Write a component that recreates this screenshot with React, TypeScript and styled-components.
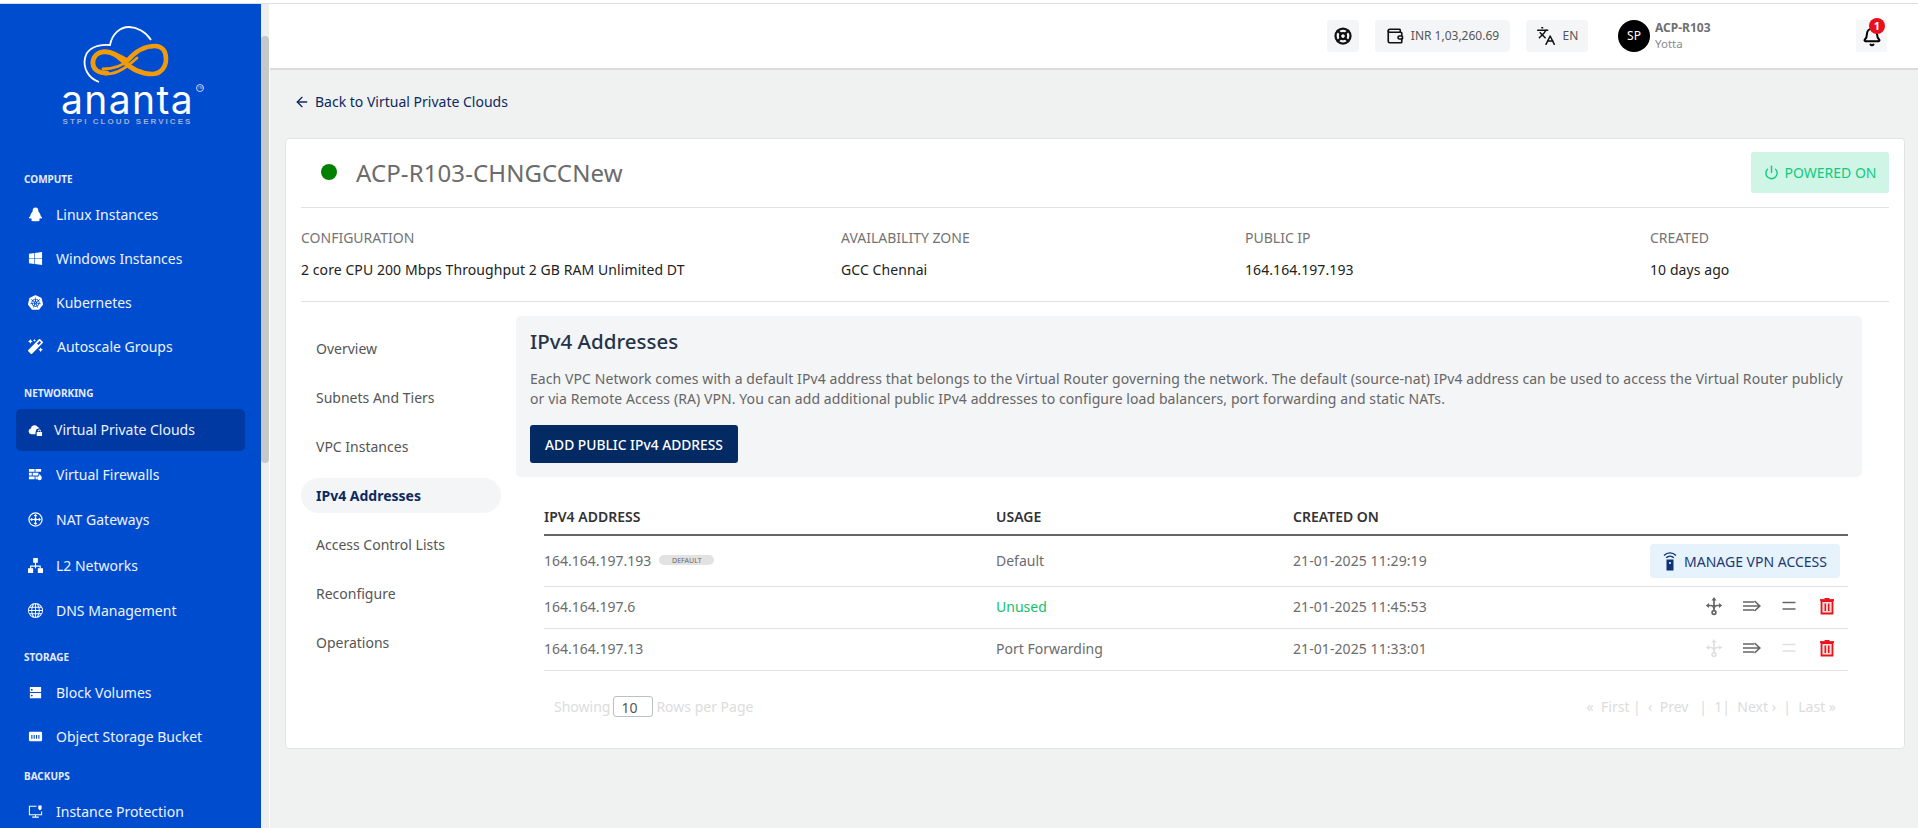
import React from "react";
import styled, { createGlobalStyle } from "styled-components";
import { ArrowLeft, Bell, Languages, LifeBuoy, Power, Wallet } from "lucide-react";
import { FaWindows, FaMagic } from "react-icons/fa";
import { SiKubernetes } from "react-icons/si";
import { BsGlobe } from "react-icons/bs";

const Global = createGlobalStyle`
  html, body { margin: 0; padding: 0; height: 100%; overflow: hidden; background: #fff; }
  * { box-sizing: border-box; }
  body { font-family: "Noto Sans", "Open Sans", sans-serif; color: #6c6c6c; }
`;

const Page = styled.div`
  width: 1918px; height: 828px; overflow: hidden; display: flex; flex-direction: column;
`;
const TopStrip = styled.div`
  height: 4px; flex: none; background: #fff; border-top: 2px solid #fff; border-bottom: 1px solid #dedede;
`;
const Shell = styled.div`
  display: flex; flex: 1; min-height: 0;
`;
const Sidebar = styled.aside`
  width: 261px; flex: none; background: #004ccf; color: #fff; overflow: hidden; display: flex; flex-direction: column; padding-top: 20px;
`;
const LogoWrap = styled.div`
  height: 142px; flex: none; display: flex; flex-direction: column; align-items: center; padding-right: 6px;
`;
const LogoMark = styled.svg`
  width: 95px; height: 60px; flex: none;
`;
const LogoWord = styled.div`
  font-family: "Inter", sans-serif; font-size: 39px; font-weight: 400; line-height: 30px; margin-top: 1px; letter-spacing: 1.4px; position: relative;
`;
const Tm = styled.span`
  position: absolute; right: -10px; top: -1px; width: 8px; height: 8px; border: 1px solid #c7d6f3; border-radius: 50%;
  font-size: 3px; line-height: 6px; text-align: center; letter-spacing: 0; color: #dde;
`;
const LogoSub = styled.div`
  font-family: "Liberation Sans", sans-serif; font-size: 8px; font-weight: 700; letter-spacing: 2.05px; color: #9db0d6; line-height: 10px; margin-top: 2px;
`;
const SectionLabel = styled.div<{ $h: number; $pb: number }>`
  height: ${p => p.$h}px; flex: none; padding: 0 0 ${p => p.$pb}px 24px; font-size: 10px; line-height: 14px; font-weight: 700; color: #e4ebfa; display: flex; align-items: flex-end;
`;
const NavItem = styled.div<{ $active?: boolean; $gap?: number; $h?: number }>`
  height: ${p => p.$h ?? 44}px; flex: none; margin: 0 16px; padding: 0 0 2px 12px; display: flex; align-items: center; gap: ${p => p.$gap ?? 13}px;
  font-size: 14px; color: #eef3ff; border-radius: 5px; background: ${p => (p.$active ? "#0039a1" : "transparent")};
  svg { width: 15px; height: 15px; flex: none; color: #fff; }
`;
const ScrollTrack = styled.div`
  width: 8px; flex: none; background: #eeeeee; padding-top: 32px; margin-right: 1px;
`;
const ScrollThumb = styled.div`
  height: 427px; width: 8px; border-radius: 4px; background: #c8c8c8;
`;
const Main = styled.main`
  flex: 1; min-width: 0; display: flex; flex-direction: column; background: #f0f2f1;
`;
const Header = styled.header`
  height: 66px; flex: none; background: #fff; border-bottom: 2px solid #dcdcdc; display: flex; align-items: center; justify-content: flex-end; padding-right: 31px; padding-bottom: 1px;
`;
const HeaderChip = styled.div<{ $w: number; $mr: number }>`
  width: ${p => p.$w}px; height: 32px; margin-right: ${p => p.$mr}px; border-radius: 4px; background: #f4f5f7; display: flex; align-items: center; justify-content: center; gap: 7px;
  font-size: 12px; color: #555;
  svg { color: #111; flex: none; }
`;
const Avatar = styled.div`
  width: 32px; height: 32px; border-radius: 50%; background: #000; color: #fff; font-size: 12px; display: flex; align-items: center; justify-content: center; margin-right: 5px; flex: none;
`;
const UserBlock = styled.div`
  width: 201px; display: flex; flex-direction: column; line-height: 16px;
`;
const UserName = styled.div`
  font-size: 12px; font-weight: 700; color: #707070;
`;
const UserOrg = styled.div`
  font-size: 11.5px; color: #8a8a8a;
`;
const BellBox = styled.div`
  width: 31px; height: 32px; background: #f6f7f8; position: relative; display: flex; align-items: center; justify-content: center;
  svg { color: #000; margin-top: 3px; }
`;
const BellBadge = styled.span`
  position: absolute; top: -2px; right: 2px; width: 16px; height: 16px; border-radius: 50%; background: #e9101d; color: #fff; font-size: 11px; font-weight: 700; display: flex; align-items: center; justify-content: center;
`;
const Content = styled.div`
  padding: 0 13px 0 15px; flex: 1; min-height: 0;
`;
const BackLink = styled.div`
  height: 68px; display: flex; align-items: center; gap: 5px; padding: 0 0 5px 9px; color: #0d2a5e; font-size: 14px;
  svg { color: #0d2a5e; }
`;
const Card = styled.section`
  height: 611px; background: #fff; border: 1px solid #e2e4e4; border-radius: 4px; padding: 0 15px;
`;
const TitleRow = styled.div`
  height: 69px; display: flex; align-items: center; justify-content: space-between; border-bottom: 1px solid #e2e2e2; padding: 0 0 0 20px;
`;
const TitleLeft = styled.div`
  display: flex; align-items: center; gap: 19px; padding-bottom: 2px;
`;
const StatusDot = styled.span`
  width: 16px; height: 16px; border-radius: 50%; background: #008000; flex: none;
`;
const Title = styled.h1`
  margin: 0; font-size: 24px; font-weight: 400; letter-spacing: 0.1px; color: #6b6b6b;
`;
const PowerBadge = styled.div`
  width: 138px; height: 41px; background: #cff5e6; color: #13c981; border-radius: 3px; display: flex; align-items: center; justify-content: center; gap: 6px; font-size: 14px; margin-top: -1px; white-space: nowrap;
`;
const InfoRow = styled.div`
  height: 94px; display: grid; grid-template-columns: 540px 404px 405px 1fr; border-bottom: 1px solid #e2e2e2; padding-top: 20px;
`;
const InfoLabel = styled.div`
  font-size: 14px; line-height: 20px; color: #747474;
`;
const InfoValue = styled.div`
  font-size: 14px; line-height: 20px; margin-top: 12px; color: #222; letter-spacing: 0.08px;
`;
const Body = styled.div`
  display: flex; padding-top: 14px; gap: 15px;
`;
const Tabs = styled.nav`
  width: 200px; flex: none; display: flex; flex-direction: column; padding-top: 15px;
`;
const Tab = styled.div<{ $active?: boolean }>`
  height: 35px; margin-bottom: 14px; border-radius: 18px; padding-left: 15px; display: flex; align-items: center; font-size: 14px;
  color: ${p => (p.$active ? "#0d2a5e" : "#555")}; font-weight: ${p => (p.$active ? 700 : 400)}; background: ${p => (p.$active ? "#f4f5f7" : "transparent")};
`;
const Pane = styled.div`
  width: 1346px; flex: none;
`;
const Intro = styled.div`
  height: 161px; border-radius: 5px; background: #f4f5f7; padding: 11px 14px;
`;
const IntroTitle = styled.h2`
  margin: 0; font-size: 20.5px; line-height: 28px; font-weight: 500; color: #243349;
`;
const IntroText = styled.p`
  margin: 14px 0 0; font-size: 14px; line-height: 20px; color: #666; letter-spacing: 0.08px;
`;
const PrimaryButton = styled.button`
  display: block; margin-top: 16px; width: 208px; height: 38px; border: 0; border-radius: 3px; background: #032a63; color: #fff; font: 500 13.8px "Noto Sans", sans-serif; padding: 0;
`;
const TableWrap = styled.div`
  padding: 24px 14px 0 28px;
`;
const cols = "452px 297px 1fr";
const HeadRow = styled.div`
  display: grid; grid-template-columns: ${cols}; height: 35px; align-items: center; border-bottom: 2px solid #666; font-size: 14px; font-weight: 600; color: #333; padding-bottom: 3px;
`;
const Row = styled.div<{ $h: number }>`
  display: grid; grid-template-columns: ${cols} 220px; height: ${p => p.$h}px; align-items: center; border-bottom: 1px solid #e2e2e2; font-size: 14px; color: #6c6c6c; padding-bottom: 2px;
`;
const AddressCell = styled.div`
  display: flex; align-items: center; gap: 8px;
`;
const DefaultTag = styled.span`
  width: 55px; height: 10px; border-radius: 6px; background: #e2e2e2; color: #666; font-size: 7px; display: flex; align-items: center; justify-content: center;
`;
const UsageCell = styled.div<{ $ok?: boolean }>`
  color: ${p => (p.$ok ? "#13c06f" : "#6c6c6c")};
`;
const DateCell = styled.div`
  letter-spacing: 0.08px;
`;
const Actions = styled.div<{ $lift?: boolean }>`
  display: flex; align-items: center; justify-content: flex-end; padding: 0 11px ${p => (p.$lift ? 2 : 0)}px 0;
`;
const VpnButton = styled.div`
  width: 190px; height: 34px; margin: 2px -3px 0 0; border-radius: 4px; background: #e6f2fc; color: #1c3a72; display: flex; align-items: center; justify-content: center; gap: 7px; font-size: 14px; white-space: nowrap;
`;
const ActionIcon = styled.svg<{ $off?: boolean; $w?: number }>`
  width: 20px; height: 20px; margin-left: ${p => p.$w ?? 18}px; color: ${p => (p.$off ? "#dfe1e1" : "#666")}; flex: none;
`;
const Pager = styled.div`
  display: flex; justify-content: space-between; align-items: center; height: 70px; padding: 0 12px 0 10px; color: #dcdcdc; font-size: 14px;
`;
const PagerLeft = styled.div`
  display: flex; align-items: center; gap: 3px;
`;
const RowsBox = styled.span`
  width: 40px; height: 21px; border: 1px solid #b9c0c8; border-radius: 3px; color: #555; padding-left: 7px; font-size: 14px; line-height: 21px;
`;
const PagerRight = styled.div`
  white-space: pre;
`;

const TuxIcon = () => (
  <svg viewBox="0 0 16 16" fill="currentColor"><path d="M8 .5c1.900 0 3 1.400 3 3.100 0 1 .3 1.500.9 2.300.9 1.100 1.600 2.600 1.700 4 .9.500 1.500 1.300 1.400 1.900-.2.600-1.400.6-2.300.3-.2.400-.4.800-.7 1.100.4.500.6 1 .3 1.400-.4.500-2.500.500-4.300.500s-3.900 0-4.300-.5c-.3-.4-.1-.9.300-1.400-.3-.3-.5-.7-.7-1.100-.9.300-2.100.3-2.300-.3-.1-.6.500-1.400 1.400-1.900.1-1.400.8-2.900 1.700-4 .6-.8.900-1.300.9-2.300C5 1.900 6.100.5 8 .5z"/></svg>
);
const VpcIcon = () => (
  <svg viewBox="0 0 16 16" fill="currentColor"><path d="M3.600 13A3.100 3.100 0 0 1 3 6.900 4 4 0 0 1 10.600 5.700a3 3 0 0 1 1.800 1.100H11a2.600 2.600 0 0 0-2.500 2.600v.7H8V13z"/><path d="M9.300 10.600h5.700V15H9.300zM10.500 10.200V9.400a1.700 1.700 0 0 1 3.300 0v.8h-1v-.8a.7.700 0 0 0-1.300 0v.8z"/></svg>
);
const FirewallIcon = () => (
  <svg viewBox="0 0 16 16" fill="currentColor"><path d="M1 2h6v3H1zM8 2h6v3H8zM1 6h3v3H1zM5 6h6v3H5zM1 10h6v3H1zM8 10h1.500v3H8z"/><path d="M12.300 7.500c.6 1.300 2.400 2 2.400 4.200a2.500 2.500 0 0 1-5 0c0-1.300.8-1.900 1.300-2.500.1.600.3.900.7 1 .3-.9.100-1.800.6-2.700z"/></svg>
);
const NatIcon = () => (
  <svg viewBox="0 0 16 16" fill="none" stroke="currentColor" strokeWidth="1.300"><circle cx="8" cy="8" r="7"/><path d="M8 3v10M3 8h10" strokeWidth="1"/><path d="M6.500 4.500 8 3l1.500 1.500M6.500 11.500 8 13l1.500-1.500M4.500 6.500 3 8l1.500 1.500M11.500 6.500 13 8l-1.500 1.500" strokeWidth="1.100"/><circle cx="8" cy="8" r="1.500" fill="currentColor" stroke="none"/></svg>
);
const L2Icon = () => (
  <svg viewBox="0 0 16 16" fill="currentColor"><path d="M5.500 0h5v5h-5zM7.400 5h1.200v3h5v3h-1.200V9.200H8.600V11H7.400V9.200H3.400V11H2.200V8h5.200zM0 11h5.500v5H0zM10.500 11H16v5h-5.500z"/></svg>
);
const BlockIcon = () => (
  <svg viewBox="0 0 16 16" fill="currentColor"><path fillRule="evenodd" d="M2 2h12v5.500H2zM2 8.500h12V14H2zM4 4a1 1 0 1 0 0 2 1 1 0 0 0 0-2zM4 10.300a1 1 0 1 0 0 2 1 1 0 0 0 0-2z"/></svg>
);
const BucketIcon = () => (
  <svg viewBox="0 0 16 16" fill="currentColor"><path fillRule="evenodd" d="M2 3h12a1.500 1.500 0 0 1 1 1v8a1.500 1.500 0 0 1-1 1H2a1.500 1.500 0 0 1-1-1V4a1.500 1.500 0 0 1 1-1zM3.500 6.500v4h1.200v-4zM6 6.500v4h1.200v-4zM8.500 6.500v4h1.200v-4zM11 6.500v4h1.200v-4z"/></svg>
);
const ProtectIcon = () => (
  <svg viewBox="0 0 16 16" fill="none" stroke="currentColor" strokeWidth="1.100"><path d="M9 2.500H1.500v9h13V8M8 11.500v2.500M4.500 14h7"/><path d="M11 1.500h3.500v3c0 1-1 1.800-1.750 2.200-.75-.4-1.750-1.200-1.750-2.200z" fill="currentColor" stroke="none"/></svg>
);
const MoveIcon = (p: { off?: boolean }) => (
  <ActionIcon $off={p.off} $w={0} viewBox="0 0 20 20" fill="none" stroke="currentColor" strokeWidth="1.700">
    <path d="M10 3v11M4 9.500h2.500c2 0 3.500 1.500 3.500 4M16 9.500h-2.500c-2 0-3.500 1.500-3.500 4" />
    <path d="M10 1 7.500 4.500h5zM1.800 9.500 5 12V7zM18.200 9.500 15 12V7z" fill="currentColor" stroke="none" />
    <circle cx="10" cy="16.500" r="1.900" fill="#fff" />
  </ActionIcon>
);
const ForwardIcon = () => (
  <ActionIcon $w={17} viewBox="0 0 20 20" fill="none" stroke="currentColor" strokeWidth="1.700">
    <path d="M2 6h11M2 10h16M2 14h11M13.500 5 18.800 10l-5.300 5" />
  </ActionIcon>
);
const EqualIcon = (p: { off?: boolean }) => (
  <ActionIcon $off={p.off} $w={18} viewBox="0 0 20 20" fill="none" stroke="currentColor" strokeWidth="1.700">
    <path d="M3.500 6.500h13M3.500 13h13" />
  </ActionIcon>
);
const TrashIcon = () => (
  <ActionIcon $w={18} viewBox="0 0 20 20" style={{ color: "#e8141c" }} fill="none" stroke="currentColor">
    <path d="M4.500 5h11v12.500h-11z" fill="#fbdcdc" strokeWidth="1.800" />
    <path d="M3 4h14" strokeWidth="1.800" />
    <path d="M7.500 2h5v1.500h-5z" fill="currentColor" stroke="none" />
    <path d="M8.300 7.500v7.500M11.700 7.500v7.500" strokeWidth="1.600" />
  </ActionIcon>
);
const VpnIcon = () => (
  <svg width="14" height="20" viewBox="0 0 14 20" fill="none" stroke="#0f3272" strokeWidth="1.400" style={{ flex: "none" }}>
    <path d="M1 4.500C4.500 1 9.500 1 13 4.500M3.200 6.800C5.400 4.800 8.600 4.800 10.800 6.800" />
    <path d="M3.500 8.500h7V19.500h-7z" fill="#0f3272" stroke="none" />
    <circle cx="7" cy="12" r="1" fill="#fff" stroke="none" />
  </svg>
);

const nav = (icon: React.ReactNode, text: string, extra: { active?: boolean; gap?: number; h?: number } = {}) => (
  <NavItem $active={extra.active} $gap={extra.gap} $h={extra.h} key={text}>{icon}{text}</NavItem>
);

export default function App() {
  return (
    <Page>
      <Global />
      <TopStrip />
      <Shell>
        <Sidebar>
          <LogoWrap>
            <LogoMark viewBox="80 24 95 60" fill="none">
              <path d="M99 82C88 78 83 68 85 58 87 49 96 44 110 45 112 34 120 27 129 27 137 27 146 32 151 40" stroke="#fff" strokeWidth="1.800" />
              <path d="M103 69C115 69 122 66 128 60 117 54 110 50 103 51 96 52 92 57 92 63 92 70 99 74 107 74 118 74 128 66 137 58" stroke="#f39a0b" strokeWidth="2.800" strokeLinecap="round" />
              <path d="M128 60C135 52 145 46 155 46 163 46 166 52 166 59 166 68 160 74 152 74 140 74 130 68 122 60 117 55 110 51 103 52 97 53 93 57 93 63 93 70 99 73 107 73" stroke="#f39a0b" strokeWidth="4.600" strokeLinecap="round" />
            </LogoMark>
            <LogoWord>ananta<Tm>TM</Tm></LogoWord>
            <LogoSub>STPI CLOUD SERVICES</LogoSub>
          </LogoWrap>
          <SectionLabel $h={26} $pb={6}>COMPUTE</SectionLabel>
          {nav(<TuxIcon />, "Linux Instances", { h: 46 })}
          {nav(<FaWindows />, "Windows Instances", { h: 43 })}
          {nav(<SiKubernetes />, "Kubernetes")}
          {nav(<FaMagic />, "Autoscale Groups", { gap: 14 })}
          <SectionLabel $h={40} $pb={9}>NETWORKING</SectionLabel>
          {nav(<VpcIcon />, "Virtual Private Clouds", { active: true, gap: 11, h: 42 })}
          {nav(<FirewallIcon />, "Virtual Firewalls", { h: 48 })}
          {nav(<NatIcon />, "NAT Gateways", { h: 42 })}
          {nav(<L2Icon />, "L2 Networks", { h: 50 })}
          {nav(<BsGlobe />, "DNS Management", { h: 40 })}
          <SectionLabel $h={39} $pb={6}>STORAGE</SectionLabel>
          {nav(<BlockIcon />, "Block Volumes", { h: 46 })}
          {nav(<BucketIcon />, "Object Storage Bucket", { h: 42 })}
          <SectionLabel $h={32} $pb={7}>BACKUPS</SectionLabel>
          {nav(<ProtectIcon />, "Instance Protection")}
        </Sidebar>
        <ScrollTrack><ScrollThumb /></ScrollTrack>
        <Main>
          <Header>
            <HeaderChip $w={32} $mr={16}><LifeBuoy size={18} strokeWidth={3} /></HeaderChip>
            <HeaderChip $w={135} $mr={16}><Wallet size={18} strokeWidth={2.2} />INR 1,03,260.69</HeaderChip>
            <HeaderChip $w={62} $mr={30}><Languages size={20} strokeWidth={1.8} />EN</HeaderChip>
            <Avatar>SP</Avatar>
            <UserBlock>
              <UserName>ACP-R103</UserName>
              <UserOrg>Yotta</UserOrg>
            </UserBlock>
            <BellBox><Bell size={20} strokeWidth={2.4} /><BellBadge>1</BellBadge></BellBox>
          </Header>
          <Content>
            <BackLink><ArrowLeft size={16} />Back to Virtual Private Clouds</BackLink>
            <Card>
              <TitleRow>
                <TitleLeft><StatusDot /><Title>ACP-R103-CHNGCCNew</Title></TitleLeft>
                <PowerBadge><Power size={15} strokeWidth={2.2} />POWERED ON</PowerBadge>
              </TitleRow>
              <InfoRow>
                <div><InfoLabel>CONFIGURATION</InfoLabel><InfoValue>2 core CPU 200 Mbps Throughput 2 GB RAM Unlimited DT</InfoValue></div>
                <div><InfoLabel>AVAILABILITY ZONE</InfoLabel><InfoValue>GCC Chennai</InfoValue></div>
                <div><InfoLabel>PUBLIC IP</InfoLabel><InfoValue>164.164.197.193</InfoValue></div>
                <div><InfoLabel>CREATED</InfoLabel><InfoValue>10 days ago</InfoValue></div>
              </InfoRow>
              <Body>
                <Tabs>
                  <Tab>Overview</Tab>
                  <Tab>Subnets And Tiers</Tab>
                  <Tab>VPC Instances</Tab>
                  <Tab $active>IPv4 Addresses</Tab>
                  <Tab>Access Control Lists</Tab>
                  <Tab>Reconfigure</Tab>
                  <Tab>Operations</Tab>
                </Tabs>
                <Pane>
                  <Intro>
                    <IntroTitle>IPv4 Addresses</IntroTitle>
                    <IntroText>Each VPC Network comes with a default IPv4 address that belongs to the Virtual Router governing the network. The default (source-nat) IPv4 address can be used to access the Virtual Router publicly or via Remote Access (RA) VPN. You can add additional public IPv4 addresses to configure load balancers, port forwarding and static NATs.</IntroText>
                    <PrimaryButton>ADD PUBLIC IPv4 ADDRESS</PrimaryButton>
                  </Intro>
                  <TableWrap>
                    <HeadRow><div>IPV4 ADDRESS</div><div>USAGE</div><div>CREATED ON</div></HeadRow>
                    <Row $h={51}>
                      <AddressCell>164.164.197.193<DefaultTag>DEFAULT</DefaultTag></AddressCell>
                      <UsageCell>Default</UsageCell>
                      <DateCell>21-01-2025 11:29:19</DateCell>
                      <Actions><VpnButton><VpnIcon />MANAGE VPN ACCESS</VpnButton></Actions>
                    </Row>
                    <Row $h={42}>
                      <AddressCell>164.164.197.6</AddressCell>
                      <UsageCell $ok>Unused</UsageCell>
                      <DateCell>21-01-2025 11:45:53</DateCell>
                      <Actions $lift><MoveIcon /><ForwardIcon /><EqualIcon /><TrashIcon /></Actions>
                    </Row>
                    <Row $h={42}>
                      <AddressCell>164.164.197.13</AddressCell>
                      <UsageCell>Port Forwarding</UsageCell>
                      <DateCell>21-01-2025 11:33:01</DateCell>
                      <Actions $lift><MoveIcon off /><ForwardIcon /><EqualIcon off /><TrashIcon /></Actions>
                    </Row>
                    <Pager>
                      <PagerLeft>Showing <RowsBox>10</RowsBox> Rows per Page</PagerLeft>
                      <PagerRight>{"«  First |  ‹  Prev   |  1|  Next ›  |  Last »"}</PagerRight>
                    </Pager>
                  </TableWrap>
                </Pane>
              </Body>
            </Card>
          </Content>
        </Main>
      </Shell>
    </Page>
  );
}
